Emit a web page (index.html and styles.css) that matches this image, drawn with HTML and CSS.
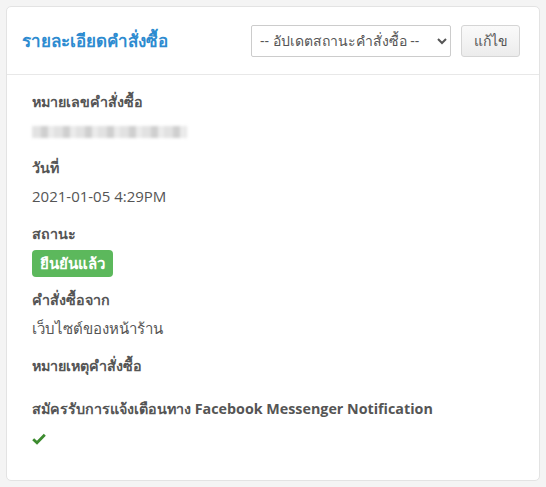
FILE: index.html
```html
<!DOCTYPE html>
<html lang="th">
<head>
    <meta charset="UTF-8">
    <meta name="viewport" content="width=device-width, initial-scale=1.0">
    <title>รายละเอียดคำสั่งซื้อ</title>
    <link rel="stylesheet" href="styles.css">
</head>
<body>
    <div class="panel">
        <div class="panel-heading">
            <h3 class="panel-title">รายละเอียดคำสั่งซื้อ</h3>
            <div class="actions">
                <select class="status-select">
                    <option>-- อัปเดตสถานะคำสั่งซื้อ --</option>
                </select>
                <button class="btn">แก้ไข</button>
            </div>
        </div>
        <div class="panel-body">
            <div class="field">
                <div class="label">หมายเลขคำสั่งซื้อ</div>
                <div class="value"><span class="blurred"></span></div>
            </div>
            <div class="field">
                <div class="label">วันที่</div>
                <div class="value">2021-01-05 4:29PM</div>
            </div>
            <div class="field">
                <div class="label">สถานะ</div>
                <div class="value"><span class="badge">ยืนยันแล้ว</span></div>
            </div>
            <div class="field">
                <div class="label">คำสั่งซื้อจาก</div>
                <div class="value">เว็บไซต์ของหน้าร้าน</div>
            </div>
            <div class="field">
                <div class="label">หมายเหตุคำสั่งซื้อ</div>
                <div class="value empty"></div>
            </div>
            <div class="field">
                <div class="label">สมัครรับการแจ้งเตือนทาง Facebook Messenger Notification</div>
                <div class="value">
                    <svg class="check" width="14" height="12" viewBox="0 0 14 12">
                        <path d="M1.2 6.2 L5 9.8 L12.8 1.8" fill="none" stroke="#3d8b2f" stroke-width="2.8"/>
                    </svg>
                </div>
            </div>
        </div>
    </div>
</body>
</html>
```

FILE: styles.css
```css
body {
    margin: 0;
    padding: 6px;
    background-color: #f4f4f4;
    font-family: "Open Sans", sans-serif;
    font-size: 15px;
    color: #555;
}
.panel {
    background-color: #fff;
    border: 1px solid #e3e3e3;
    border-radius: 5px;
    height: 475px;
    box-sizing: border-box;
}
.panel-heading {
    display: flex;
    align-items: center;
    justify-content: space-between;
    height: 67px;
    padding: 0 19px 0 15px;
    border-bottom: 1px solid #e8e8e8;
}
.panel-title {
    margin: 0;
    font-size: 17px;
    font-weight: 600;
    color: #2d8bd0;
}
.actions {
    display: flex;
    align-items: center;
    gap: 10px;
}
.status-select {
    width: 200px;
    height: 32px;
    padding: 0 4px;
    border: 1px solid #ccc;
    border-radius: 2px;
    background-color: #fff;
    font-family: "Open Sans", sans-serif;
    font-size: 14px;
    color: #555;
}
.btn {
    width: 59px;
    height: 32px;
    padding: 0;
    border: 1px solid #d5d5d5;
    border-radius: 3px;
    background: linear-gradient(#fafafa, #ececec);
    font-family: "Open Sans", sans-serif;
    font-size: 14px;
    color: #555;
}
.panel-body {
    padding: 14px 25px;
}
.field {
    margin-bottom: 10px;
}
.label {
    font-size: 14.3px;
    font-weight: bold;
    line-height: 26px;
}
.value {
    height: 30px;
    line-height: 30px;
}
.value.empty {
    height: 7px;
}
.blurred {
    display: inline-block;
    width: 155px;
    height: 12px;
    vertical-align: middle;
    background: repeating-linear-gradient(90deg, #e2e2e2 0 9px, #cfcfcf 9px 16px, #ebebeb 16px 22px);
    filter: blur(1.5px);
}
.badge {
    display: inline-block;
    padding: 0 8px;
    border-radius: 4px;
    background-color: #5cb85c;
    color: #fff;
    font-weight: bold;
    line-height: 27px;
    vertical-align: middle;
}
.check {
    vertical-align: middle;
}
```
